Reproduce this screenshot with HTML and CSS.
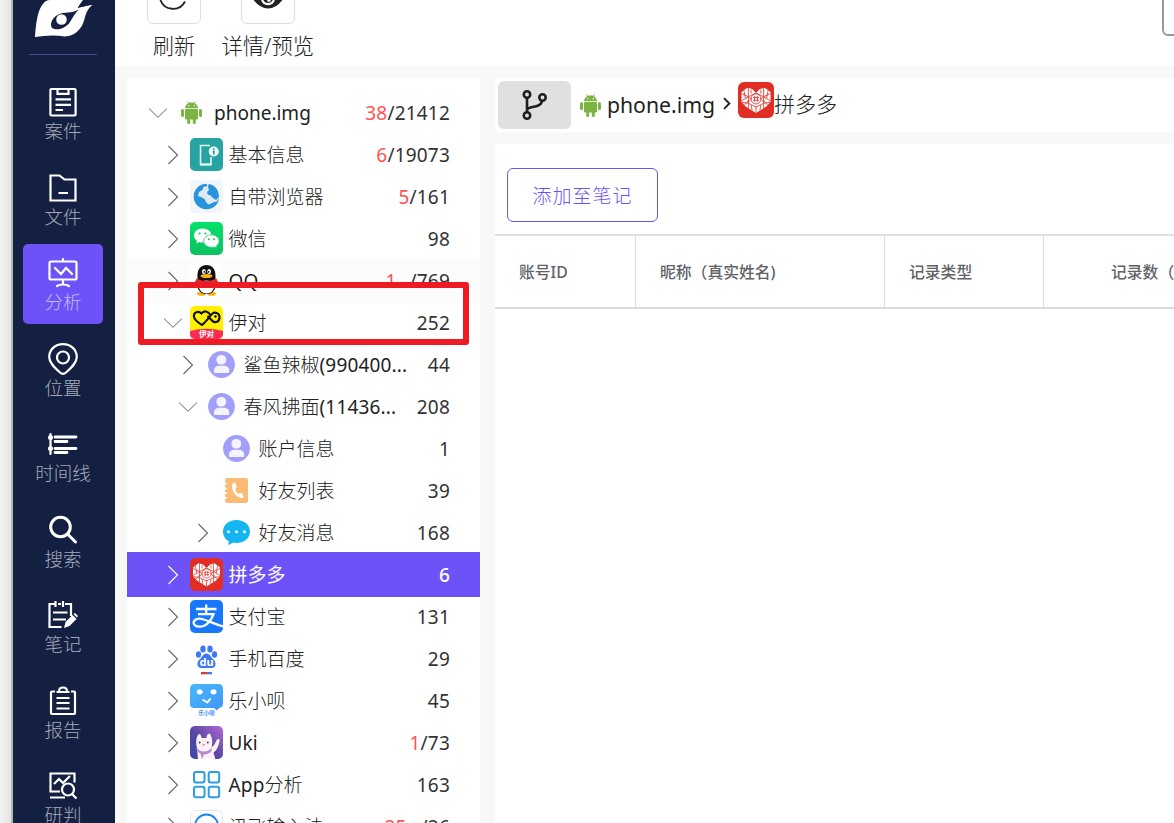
FILE: index.html
```html
<!DOCTYPE html>
<html lang="zh-CN">
<head>
<meta charset="utf-8">
<title>phone.img - 分析</title>
<link rel="stylesheet" href="styles.css">
</head>
<body>
<svg class="defs" aria-hidden="true">
  <defs>
    <linearGradient id="g-wx" x1="0" y1="0" x2="0" y2="1"><stop offset="0" stop-color="#04e16c"/><stop offset="1" stop-color="#0cc160"/></linearGradient>
    <linearGradient id="g-lx" x1="0" y1="0" x2="1" y2="1"><stop offset="0" stop-color="#48b9fb"/><stop offset="1" stop-color="#3f96f8"/></linearGradient>
    <linearGradient id="g-uki" x1="0" y1="1" x2="1" y2="0"><stop offset="0" stop-color="#3a4aae"/><stop offset=".45" stop-color="#5546a0"/><stop offset="1" stop-color="#b46ad6"/></linearGradient>
    <clipPath id="c-app"><rect width="33" height="33" rx="5"/></clipPath>
    <clipPath id="c-heart"><path d="M3 9.500L8.500 5.300 13 6.500 16.500 10 20 6.500 24.500 5.300 30 9.500V18L26 22.500 16.500 28.500 7 22.500 3 18z"/></clipPath>
    <clipPath id="c-globe"><circle cx="16.500" cy="16.500" r="12.800"/></clipPath>
    <symbol id="down" viewBox="0 0 20 12"><path d="M1 1.500l9 8.800 9-8.800" fill="none" stroke="currentColor" stroke-width="1"/></symbol>
    <symbol id="right" viewBox="0 0 12 20"><path d="M1.500 1l9 9-9 9" fill="none" stroke="currentColor" stroke-width="1.100"/></symbol>
    <symbol id="android" viewBox="0 0 21 23">
      <g fill="#7cb342"><path d="M4 7.300C4.100 5 5.300 3.200 7.200 2.200L6.100.6l.5-.4 1.300 1.600c1.600-.5 3.600-.5 5.200 0L14.400.2l.5.4-1.100 1.600C15.700 3.200 16.900 5 17 7.300z"/><rect x="4" y="8" width="13" height="10.500" rx="1.200"/><rect x="0" y="8" width="3" height="8" rx="1.500"/><rect x="18" y="8" width="3" height="8" rx="1.500"/><rect x="6.200" y="15" width="3" height="8" rx="1.500"/><rect x="11.800" y="15" width="3" height="8" rx="1.500"/></g>
      <g fill="#fff"><circle cx="7.700" cy="4.800" r=".7"/><circle cx="13.300" cy="4.800" r=".7"/></g>
    </symbol>
    <symbol id="pdd" viewBox="0 0 33 33">
      <rect width="33" height="33" rx="5.500" fill="#e12e24"/>
      <g clip-path="url(#c-heart)"><rect width="33" height="33" fill="#fff"/>
        <g fill="none" stroke="#e12e24" stroke-width=".75"><path d="M9.500 4v22M23.500 4v22M3 10.500l6.500 3 7-3.500 7 3.500 6.500-3M3 17.500l6.500-4M30 17.500l-6.500-4M9.500 19.500l7 3.500 7-3.500M3 18.500l6.500 1M30 18.500l-6.500 1M16.500 22v7M5.500 8l1.300 7M27.500 8l-1.300 7M6 21l3.500-4M27 21l-3.500-4M12 7v3.500M21 7v3.500M12 21l1 5M21 21l-1 5"/><circle cx="16.500" cy="15.500" r="4.600"/><path d="M15.200 12.800v5.400M17.800 12.800v5.400M13.800 14.300h5.400M13.800 16.700h5.400M9.500 14l3 1.500-3 3M23.500 14l-3 1.500 3 3"/></g></g>
    </symbol>
    <symbol id="user" viewBox="0 0 27 27"><circle cx="13.500" cy="13.500" r="13.400" fill="#a29ffb"/><g fill="#f4f4ff"><circle cx="13.300" cy="8.800" r="4.900"/><path d="M6 21v-1.500c0-3.200 2.600-4.700 5-4.700h5c2.600 0 5.200 1.600 5.200 4.700V21q0 1-1 1H7q-1 0-1-1z"/></g></symbol>
  </defs>
</svg>

<div class="app">
  <div class="edge"></div>
  <nav class="sidebar">
    <div class="brand">
      <svg class="logo" viewBox="0 0 60 38"><path fill="#fff" d="M0 37C1 22 3 9 8 4 10 1 12 0 15 0H48C46 3 44 5 43 7.500 48 7 53 5 57.500 5 53 8 51 13 49.500 19 47 29 40 36 30 36.500 20 35 10 35.500 0 37z"/><path fill="#132042" d="M49 0C47 3 45 5.500 42.500 8L57 4.500V0z"/><path fill="#132042" d="M44 9.500C36 14 30 11 22.500 15 17 18 14.500 24 17 28 22 31 31 28.500 35 22 38 17 40 13 44 9.500z"/><circle cx="26.500" cy="19.500" r="5.300" fill="#fff"/></svg>
    </div>
    <a class="nav"><svg class="nav-icon" viewBox="0 0 30 30"><g><rect x="2.400" y="2" width="25.200" height="26.500" rx="1"/><path d="M9.500 2.500v4.300h11V2.500M7.500 12.300h15.500M7.500 17.800h15.500M7.500 23h7.500"/></g></svg><span>案件</span></a>
    <a class="nav"><svg class="nav-icon" viewBox="0 0 30 30"><g><path d="M2.500 2.500h9l5 4h11v21h-25zM10.500 20h9.500"/></g></svg><span>文件</span></a>
    <a class="nav active"><svg class="nav-icon" viewBox="0 0 30 30"><g><rect x="1.500" y="3.500" width="27" height="18" rx="1.500"/><path d="M15 1v2M15 22v4M9 28c3-2 9-2 12 0M7 10l6 6 5-6 6 6" stroke-linecap="round"/></g></svg><span>分析</span></a>
    <a class="nav"><svg class="nav-icon tall" viewBox="0 0 30 32"><g><path d="M15 0.200C7 .2 1.200 5.800 1.200 13c0 6 5.800 11 10.800 15.500 2 1.700 4 1.700 6 0C23 24 28.800 19 28.800 13 28.800 5.800 23 .2 15 .2z"/><circle cx="15" cy="13.500" r="6"/></g></svg><span>位置</span></a>
    <a class="nav"><svg class="nav-icon" viewBox="0 0 30 30"><g stroke-linecap="round"><path d="M2.500 5v20"/><path class="bars" d="M7 8h21M7 12.500h12M7 19.500h21M7 23.500h12"/></g><circle cx="2.500" cy="8.500" r="2.500" fill="#fff"/><circle cx="2.500" cy="19.500" r="2.500" fill="#fff"/></svg><span>时间线</span></a>
    <a class="nav"><svg class="nav-icon" viewBox="0 0 30 30"><g class="bold"><circle cx="12.500" cy="12" r="9.800"/><path d="M19.500 19l8 8" stroke-linecap="round"/></g></svg><span>搜索</span></a>
    <a class="nav"><svg class="nav-icon" viewBox="0 0 30 30"><g><path d="M7 4H1.500v23h12M10 4h3M17 4h6v12M7.500 1v6M15 1v6M5 12.500h14.500M5 19.500h13"/></g><path fill="#fff" d="M16 28l1.500-6 7-7 4 4-7 7zM25.500 14l1.500-1 3 3-1.200 1.500z"/></svg><span>笔记</span></a>
    <a class="nav"><svg class="nav-icon" viewBox="0 0 30 30"><g><path d="M7 5.500H4q-1 0-1 1V27q0 1 1 1h22q1 0 1-1V6.500q0-1-1-1h-3M8.500 6h13M11 5.500C11 2.500 13 1.500 15 1.500s4 1 4 4M8.500 12h13M8.500 17h13M8.500 22.500h13"/></g></svg><span>报告</span></a>
    <a class="nav"><svg class="nav-icon" viewBox="0 0 30 30"><g><path d="M12 20.500H2.500v-18h24v9M2 26.500h15M6 13l5-5 4 4 7-7"/><circle cx="20" cy="18.500" r="6"/><path d="M24 23l4.500 4.500"/></g></svg><span>研判</span></a>
  </nav>

  <main class="workspace">
    <header class="toolbar">
      <div class="tool"><div class="tool-box"><svg viewBox="0 0 30 30"><path d="M1.300 13.500A13.400 13.400 0 0 0 26 15.500" fill="none" stroke="#222" stroke-width="1.800"/></svg></div><span>刷新</span></div>
      <div class="tool"><div class="tool-box"><svg viewBox="0 0 36 30"><path fill="#222" d="M0 10q18-20 36 0-8 13-18 13T0 10z"/><circle cx="18" cy="12" r="7.500" fill="#fff"/><circle cx="18" cy="12" r="5.200" fill="#222"/><circle cx="19" cy="14" r="2" fill="#fff"/></svg></div><span>详情/预览</span></div>
      <div class="field"></div>
    </header>

    <div class="panes">
      <section class="tree">
        <div class="row l0"><svg class="arrow down"><use href="#down"/></svg><i class="icon"><svg class="android"><use href="#android"/></svg></i><b>phone.img</b><em><u>38</u>/21412</em></div>
        <div class="row l1"><svg class="arrow"><use href="#right"/></svg><i class="icon"><svg viewBox="0 0 33 33"><rect width="33" height="33" rx="5" fill="#27a4a2"/><path d="M20 7.500h-9.500v19H21V19" fill="none" stroke="#e8fffb" stroke-width="1.500"/><path d="M10 25.500h11.500v2H10z" fill="#e8fffb"/><circle cx="23.700" cy="13.500" r="5" fill="#f0fffc"/><path d="M23.700 10.300v1.500M22.800 13.300h1v3.200" stroke="#159490" stroke-width="1.500" fill="none"/></svg></i><b>基本信息</b><em><u>6</u>/19073</em></div>
        <div class="row l1"><svg class="arrow"><use href="#right"/></svg><i class="icon"><svg viewBox="0 0 33 33"><rect width="33" height="33" rx="5" fill="#f3f6f9"/><circle cx="16.500" cy="16.500" r="12.800" fill="#dce9f4"/><g clip-path="url(#c-globe)" fill="#2794dc"><path d="M7 3h9l1.500 3-4 1-1 3-3.500 2-1 4 3 1 3.500 2 2 4 2.500 1.500 4-2 4-1 2-3 2 1-2 7-7 4H11l-8-8 0-9z"/><path d="M19 3q7 2 9 8l1 6-3 3-3-2-3-3-2 0-1-3 2-2-1-3z"/></g></svg></i><b>自带浏览器</b><em><u>5</u>/161</em></div>
        <div class="row l1"><svg class="arrow"><use href="#right"/></svg><i class="icon"><svg viewBox="0 0 33 33"><rect width="33" height="33" rx="5" fill="url(#g-wx)"/><path d="M12.500 6.500C7.500 6.500 4 9.600 4 13.500c0 2.300 1.200 4.100 3 5.300l-.8 2.700 3-1.600q1.600.5 4 .5c5 0 8.300-3 8.300-7s-4-6.900-9-6.900z" fill="#fff"/><path d="M21.500 12.800c-4.400 0-7.800 2.700-7.800 6.300s3.400 6.300 7.800 6.300q1.500 0 2.900-.5l2.700 1.400-.7-2.300c1.600-1.200 2.700-2.900 2.700-4.900 0-3.500-3.200-6.300-7.600-6.300z" fill="#fff" stroke="#09d067" stroke-width=".8"/><g fill="#09cb64"><circle cx="9.600" cy="11.500" r="1.100"/><circle cx="15.600" cy="11.500" r="1.100"/><circle cx="18.800" cy="17.300" r="1"/><circle cx="24" cy="17.300" r="1"/></g></svg></i><b>微信</b><em>98</em></div>
        <div class="row l1 hover"><svg class="arrow"><use href="#right"/></svg><i class="icon"><svg viewBox="0 0 33 33"><rect width="33" height="33" rx="5" fill="#fff"/><ellipse cx="11.500" cy="29.800" rx="4.500" ry="2" fill="#f9ac18"/><ellipse cx="21.500" cy="29.800" rx="4.500" ry="2" fill="#f9ac18"/><path d="M7 15c-3 4-4 8-2.500 9 1 0 2-1.500 2.500-2.500 1 6 5 8.500 9.500 8.500s8.500-2.500 9.500-8.500c.5 1 1.500 2.500 2.500 2.500 1.500-1 .5-5-2.500-9z" fill="#151515"/><ellipse cx="16.500" cy="23" rx="7.500" ry="6.500" fill="#fff"/><path d="M7.500 13C7 5 11 1 16.500 1S26 5 25.500 13v3h-18z" fill="#111"/><path d="M6.500 14.500q10 5 20 0l1 3q-3 2-6.500 2.500H12v4H9v-4.500q-2-.5-3.500-2z" fill="#e92a2b"/><ellipse cx="16.500" cy="12" rx="6" ry="2" fill="#fbb51c"/><ellipse cx="13.900" cy="7.500" rx="1.900" ry="2.600" fill="#fff"/><ellipse cx="19.100" cy="7.500" rx="1.900" ry="2.600" fill="#fff"/><circle cx="14.400" cy="7.800" r=".9"/><circle cx="18.600" cy="7.800" r=".9"/></svg></i><b><span>QQ</span></b><em><u class="spaced">1</u>/769</em></div>
        <div class="row l1"><svg class="arrow down"><use href="#down"/></svg><i class="icon"><svg viewBox="0 0 33 33"><g clip-path="url(#c-app)"><rect width="33" height="33" fill="#fff000"/><path d="M0 25q16.500-4.500 33 0v8H0z" fill="#fa2c55"/><path d="M21 9.500C18 5 14 4 11.500 7.500 8 4 3 7 4 11c1 4 5 6 8 8 4-3 7-8 10.500-11.500C25 5.500 30 7 29.500 12c-.5 4-5 6-8.500 1.500L17.500 10" fill="none" stroke="#111" stroke-width="2.100"/><circle cx="25.500" cy="10.500" r="1.200"/></g><text class="yidui" x="16.500" y="30.800" text-anchor="middle">伊对</text></svg></i><b>伊对</b><em>252</em></div>
        <div class="row l2"><svg class="arrow"><use href="#right"/></svg><i class="icon"><svg class="small"><use href="#user"/></svg></i><b>鲨鱼辣椒<span>(990400...</span></b><em>44</em></div>
        <div class="row l2"><svg class="arrow down"><use href="#down"/></svg><i class="icon"><svg class="small"><use href="#user"/></svg></i><b>春风拂面<span>(11436...</span></b><em>208</em></div>
        <div class="row l3"><span class="arrow"></span><i class="icon"><svg class="small"><use href="#user"/></svg></i><b>账户信息</b><em>1</em></div>
        <div class="row l3"><span class="arrow"></span><i class="icon"><svg class="small" viewBox="0 0 27 27"><rect x="2" y="1" width="23" height="25" rx="2.500" fill="#fabb74"/><path d="M0 6.500h3M0 11.500h3M0 16h3M0 21h3" stroke="#fff" stroke-width="1.800" stroke-linecap="round"/><path d="M10.500 5.500C8 8 9 12 11 15.500S17 22 20.500 20.500l-.8-3.800-3-.8-1.300 1.300c-2-1.200-3.300-4.200-3-6l1.300-1.500-1-3.500z" fill="#fff"/></svg></i><b>好友列表</b><em>39</em></div>
        <div class="row l3"><svg class="arrow"><use href="#right"/></svg><i class="icon"><svg class="small" viewBox="0 0 27 27"><path d="M13.500 1C5.500 1 0 6 0 12.500c0 4.500 2.300 7.700 5.500 9.500v4.300l4.500-2.800q1.700.4 3.500.4C21.500 23.900 27 19 27 12.500S21.500 1 13.500 1z" fill="#14b6f2"/><g fill="#fff"><circle cx="5.500" cy="12.700" r="1.500"/><circle cx="13.500" cy="12.700" r="1.500"/><circle cx="21.500" cy="12.700" r="1.500"/></g></svg></i><b>好友消息</b><em>168</em></div>
        <div class="row l1 selected"><svg class="arrow"><use href="#right"/></svg><i class="icon"><svg><use href="#pdd"/></svg></i><b>拼多多</b><em>6</em></div>
        <div class="row l1"><svg class="arrow"><use href="#right"/></svg><i class="icon"><svg viewBox="0 0 33 33"><rect width="33" height="33" rx="5" fill="#1777fe"/><g fill="none" stroke="#fff" stroke-width="2.300"><path d="M6 9h20.500M16.200 4.500v9M8 14.200h15.500c-2 6-7 12.500-14 12.500-4 0-6-2-5.800-4.300C4 19 8.500 18 12 19c6 1.500 12 5 21 7.500"/></g></svg></i><b>支付宝</b><em>131</em></div>
        <div class="row l1"><svg class="arrow"><use href="#right"/></svg><i class="icon"><svg viewBox="0 0 33 33"><g fill="#3c78f0"><ellipse cx="13" cy="7" rx="2.700" ry="3.600"/><ellipse cx="20" cy="7" rx="2.700" ry="3.600"/><ellipse cx="8.500" cy="12.500" rx="2.600" ry="3.300"/><ellipse cx="24.500" cy="12.500" rx="2.600" ry="3.300"/><path d="M16.500 11.500c3.500 0 4.500 4 7 6 3 2.500 3 8.500-2 8.500h-10c-5 0-5-6-2-8.500 2.500-2 3.500-6 7-6z"/></g><text class="du" x="16.500" y="24.300" text-anchor="middle">du</text><path d="M11 30h6v2.300h-6z" fill="#e93434"/><path d="M17 30h5v2.300h-5z" fill="#3f7cf5"/></svg></i><b>手机百度</b><em>29</em></div>
        <div class="row l1"><svg class="arrow"><use href="#right"/></svg><i class="icon"><svg viewBox="0 0 33 33"><path d="M5 0h23q5 0 5 5v14q0 4.500-4 5l-2 2.500-3-2.500H4q-4 0-4-4V5q0-5 5-5z" fill="url(#g-lx)"/><g fill="#fff"><ellipse cx="9.700" cy="7.800" rx="3" ry="2.600"/><ellipse cx="23.500" cy="7.800" rx="3" ry="2.600"/></g><path d="M12.500 15.500l5 3 3-4" fill="none" stroke="#fff" stroke-width="2"/><text class="lexiao" x="16.500" y="30.500" text-anchor="middle">乐小呗</text></svg></i><b>乐小呗</b><em>45</em></div>
        <div class="row l1"><svg class="arrow"><use href="#right"/></svg><i class="icon"><svg viewBox="0 0 33 33"><g clip-path="url(#c-app)"><rect width="33" height="33" fill="url(#g-uki)"/><path d="M7 22c-1.500-5-1-12 2-14 2 0 2.500 2.500 2.500 4h5c0-2 1-4.500 3-4.500 2.500 2 3.500 9 2 14l3-3 2.500-5c1.500-1.500 3.500 0 2.500 2-1 5-3 9-6 11l2 7H8z" fill="#fcf2f5"/><path d="M6 22q8 7 16 0l-1 4q-4 2.500-7 2.500L12 33l-1.500-5.500Q8 27 6 22z" fill="#b48ad2"/><circle cx="9.700" cy="16.500" r=".9" fill="#44334c"/><circle cx="17.800" cy="16.500" r=".9" fill="#44334c"/><ellipse cx="13.700" cy="18.700" rx="1.300" ry="1" fill="#e88aa0"/></g></svg></i><b><span>Uki</span></b><em><u>1</u>/73</em></div>
        <div class="row l1"><svg class="arrow"><use href="#right"/></svg><i class="icon"><svg viewBox="0 0 33 33"><g fill="none" stroke="#2b9de0" stroke-width="2"><rect x="4" y="4" width="10.500" height="10.500" rx="2"/><rect x="18.700" y="4" width="10.500" height="10.500" rx="2"/><rect x="4" y="18.700" width="10.500" height="10.500" rx="2"/><rect x="18.700" y="18.700" width="10.500" height="10.500" rx="2"/></g></svg></i><b><span>App</span>分析</b><em>163</em></div>
        <div class="row l1"><svg class="arrow"><use href="#right"/></svg><i class="icon"><svg viewBox="0 0 33 33"><rect x=".5" y=".5" width="32" height="32" rx="5" fill="#fff" stroke="#e6e6e6"/><circle cx="16.500" cy="16" r="11.500" fill="none" stroke="#1684f2" stroke-width="2"/></svg></i><b>讯飞输入法</b><em><u class="spaced wide">25</u>/26</em></div>
        <div class="marker"></div>
      </section>

      <section class="detail">
        <div class="crumbs">
          <button class="branch"><svg viewBox="0 0 26 30"><g fill="none" stroke="#1f1f1f" stroke-width="2.600"><circle cx="5" cy="4.500" r="3.200"/><circle cx="5" cy="25.500" r="3.200"/><circle cx="20.500" cy="7.500" r="3.200"/><path d="M5 8v14M5 19.500c2-3 6-2 10-3.500 3-1 4.500-2.500 5-5"/></g></svg></button>
          <svg class="android"><use href="#android"/></svg>
          <span class="crumb">phone.img</span>
          <svg class="sep" viewBox="0 0 8 11"><path d="M1.500 1l4.500 4.500L1.500 10" fill="none" stroke="#222" stroke-width="1.600"/></svg>
          <svg class="crumb-app"><use href="#pdd"/></svg><span class="crumb-name">拼多多</span>
        </div>
        <div class="records">
          <button class="add-note">添加至笔记</button>
          <div class="thead">
            <div>账号ID</div>
            <div>昵称（真实姓名)</div>
            <div>记录类型</div>
            <div class="count">记录数（</div>
          </div>
        </div>
      </section>
    </div>
  </main>
</div>
</body>
</html>
```
FILE: styles.css
```css
* { box-sizing: border-box; }
body {
  margin: 0;
  font-family: "Noto Sans", "Noto Sans CJK SC", sans-serif;
  color: #222;
  overflow: hidden;
}
svg { display: block; flex: none; }
.defs { position: absolute; width: 0; height: 0; }
.app { display: flex; width: 1174px; height: 823px; overflow: hidden; }
.edge {
  flex: none;
  width: 13px;
  border-right: 2px solid #b4b4b4;
  background: linear-gradient(90deg, #f3f3f3, #e3e3e3);
}

.sidebar {
  flex: none;
  display: flex;
  flex-direction: column;
  align-items: center;
  width: 102px;
  height: 823px;
  padding-right: 2px;
  background: #132042;
}
.brand { flex: none; width: 68px; height: 55px; margin-bottom: 18px; border-bottom: 1px solid #40508c; }
.logo { width: 60px; height: 38px; margin: 0 0 0 6px; }
.nav {
  flex: none;
  display: flex;
  flex-direction: column;
  align-items: center;
  width: 80px;
  height: 80px;
  margin-bottom: 5.500px;
  padding-top: 14px;
  border-radius: 5px;
  color: #a3a9b7;
  font-size: 18.500px;
  font-weight: 300;
  line-height: 24px;
}
.nav-icon { width: 30px; height: 30px; margin-bottom: 2px; }
.nav-icon.tall { height: 32px; margin-bottom: 0; overflow: visible; }
.nav-icon g { fill: none; stroke: #fff; stroke-width: 2.200; }
.nav-icon .bars { stroke-width: 2.800; }
.nav-icon g.bold { stroke-width: 3; }
.nav.active { background: #6c52f7; color: #c6bcfc; }

.workspace { flex: none; width: 1059px; background: #f8f8f8; }
.toolbar { display: flex; gap: 20.500px; height: 66px; padding-left: 32px; background: #fff; }
.tool { display: flex; flex-direction: column; align-items: center; font-size: 21.300px; font-weight: 300; line-height: 30px; }
.tool-box {
  display: flex;
  justify-content: center;
  width: 54px;
  height: 54px;
  margin: -30px 0 7px;
  padding-top: 15px;
  border: 1px solid #dedede;
  border-radius: 6px;
}
.tool-box svg { width: 34px; height: 30px; }
.field { width: 60px; height: 56px; margin: -20px -48px 0 auto; border: 2px solid #999; border-radius: 6px; }

.panes { display: flex; gap: 15px; padding: 12px 0 0 12px; }
.tree { position: relative; flex: none; width: 353px; height: 745px; padding-top: 14px; background: #fff; overflow: hidden; }
.row { display: flex; align-items: center; height: 42px; padding-right: 30px; font-size: 19px; line-height: 26px; }
.l0 { padding-left: 23px; }
.l1 { padding-left: 38px; }
.l2 { padding-left: 53px; }
.l3 { padding-left: 68px; }
.row.hover, .row.selected { height: 45px; margin: -2px 0 -1px; padding-top: 2px; padding-bottom: 1px; }
.hover { background: #fcfcfc; }
.selected { background: #6c52f7; color: #fff; }
.arrow { flex: none; width: 16px; height: 20px; color: #666; }
.arrow.down { width: 20px; height: 12px; margin: 0 -2px; }
.selected .arrow { color: #fff; }
.icon { display: flex; flex: none; align-items: center; justify-content: center; width: 33px; height: 33px; margin: 0 5px 1px 9px; font-style: normal; }
.icon svg { width: 33px; height: 33px; }
.icon .small { width: 27px; height: 27px; }
svg.android, .icon .android { width: 21px; height: 23px; }
.row b { flex: 1; padding-left: .5px; font-weight: 300; white-space: nowrap; }
.row b span { font-weight: 400; letter-spacing: .15px; }
.row.l0 b { padding-left: 1px; font-weight: 400; }
.row.selected b { font-weight: 400; }
.row em { font-style: normal; font-weight: 400; color: #333; white-space: nowrap; letter-spacing: .2px; }
.row.selected em { color: #fff; font-weight: 500; }
.row u { text-decoration: none; color: #ff5252; }
.spaced { padding-right: 13px; }
.wide { padding-right: 14px; }
.yidui { font-size: 7.500px; font-weight: 700; fill: #fff; }
.du { font: 700 11px "Noto Sans", sans-serif; fill: #fff; }
.lexiao { font-size: 5.500px; font-weight: 700; fill: #4c96f0; }
.marker { position: absolute; left: 11px; top: 204px; width: 331px; height: 63px; border: 6px solid #ed1c24; border-radius: 3px; }

.detail { flex: 1; min-width: 0; }
.crumbs { display: flex; align-items: center; height: 54px; padding-left: 3px; background: #fff; font-size: 21.200px; }
.branch { display: flex; align-items: center; justify-content: center; width: 73px; height: 48px; margin-right: 9px; padding: 0; border: 0; border-radius: 6px; background: #e0e0e0; }
.branch svg { width: 26px; height: 30px; }
.crumb { margin: 0 7px 2px 6px; }
.sep { width: 10px; height: 13px; margin-right: 6px; margin-bottom: 3px; }
.crumb-app { width: 36px; height: 36px; margin-bottom: 10px; }
.crumb-name { padding-bottom: 4px; font-size: 21px; font-weight: 300; }
.records { height: 679px; margin-top: 12px; padding-top: 24px; background: #fff; overflow: hidden; }
.add-note {
  display: block;
  width: 151px;
  height: 54px;
  margin: 0 0 12px 12px;
  padding: 0 0 2px 0;
  border: 1px solid #6c52f7;
  border-radius: 6px;
  background: #fff;
  color: #6c52f7;
  font: 300 19px "Noto Sans CJK SC", sans-serif;
  letter-spacing: 1px;
}
.thead {
  display: grid;
  grid-template-columns: 141px 249px 159px 200px;
  height: 75px;
  border-top: 2px solid #e0e0e0;
  border-bottom: 2px solid #d9d9d9;
  color: #606266;
  font-size: 15.800px;
  font-weight: 500;
}
.thead div { display: flex; align-items: center; padding-left: 24px; border-right: 1px solid #dedede; white-space: nowrap; }
.thead .count { padding-left: 67px; }
```
